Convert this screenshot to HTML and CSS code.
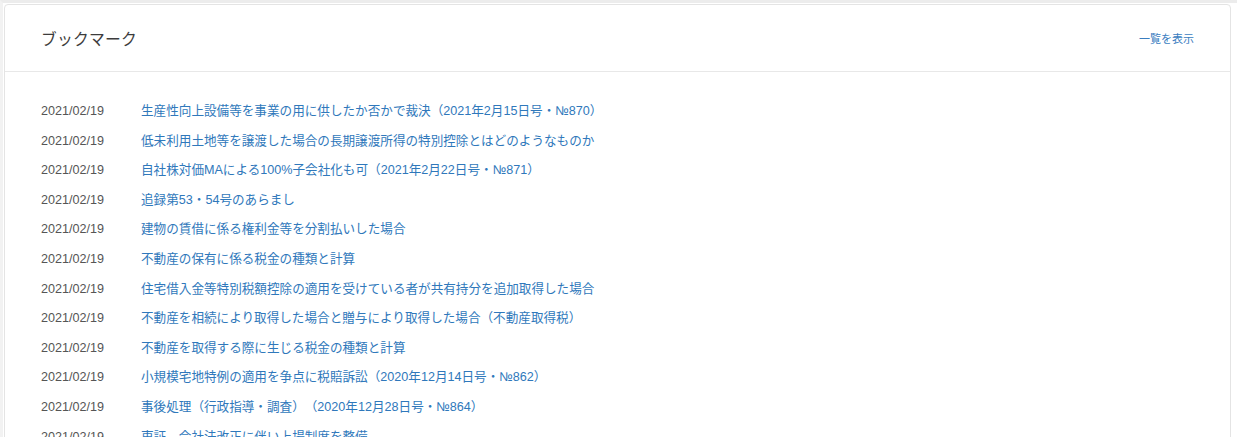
FILE: index.html
```html
<!DOCTYPE html>
<html lang="ja">
<head>
<meta charset="utf-8">
<title>ブックマーク</title>
<link rel="stylesheet" href="styles.css">
</head>
<body>
<div class="page">
  <section class="card">
    <header class="card-head">
      <h2 class="card-title">ブックマーク</h2>
      <a class="more" href="#">一覧を表示</a>
    </header>
    <ul class="list">
      <li class="row"><span class="date">2021/02/19</span><a class="title" href="#">生産性向上設備等を事業の用に供したか否かで裁決（2021年2月15日号・№870）</a></li>
      <li class="row"><span class="date">2021/02/19</span><a class="title" href="#">低未利用土地等を譲渡した場合の長期譲渡所得の特別控除とはどのようなものか</a></li>
      <li class="row"><span class="date">2021/02/19</span><a class="title" href="#">自社株対価MAによる100%子会社化も可（2021年2月22日号・№871）</a></li>
      <li class="row"><span class="date">2021/02/19</span><a class="title" href="#">追録第53・54号のあらまし</a></li>
      <li class="row"><span class="date">2021/02/19</span><a class="title" href="#">建物の賃借に係る権利金等を分割払いした場合</a></li>
      <li class="row"><span class="date">2021/02/19</span><a class="title" href="#">不動産の保有に係る税金の種類と計算</a></li>
      <li class="row"><span class="date">2021/02/19</span><a class="title" href="#">住宅借入金等特別税額控除の適用を受けている者が共有持分を追加取得した場合</a></li>
      <li class="row"><span class="date">2021/02/19</span><a class="title" href="#">不動産を相続により取得した場合と贈与により取得した場合（不動産取得税）</a></li>
      <li class="row"><span class="date">2021/02/19</span><a class="title" href="#">不動産を取得する際に生じる税金の種類と計算</a></li>
      <li class="row"><span class="date">2021/02/19</span><a class="title" href="#">小規模宅地特例の適用を争点に税賠訴訟（2020年12月14日号・№862）</a></li>
      <li class="row"><span class="date">2021/02/19</span><a class="title" href="#">事後処理（行政指導・調査）（2020年12月28日号・№864）</a></li>
      <li class="row"><span class="date">2021/02/19</span><a class="title" href="#">東証、会社法改正に伴い上場制度を整備</a></li>
    </ul>
  </section>
</div>
</body>
</html>
```
FILE: styles.css
```css
html, body {
  margin: 0;
  padding: 0;
  background: #ffffff;
  overflow: hidden;
}
body {
  font-family: "Liberation Sans", "Noto Sans CJK JP", sans-serif;
  color: #333;
  text-spacing-trim: space-all;
}
.page {
  border-top: 3px solid #ececec;
  border-left: 3px solid #f2f2f2;
  padding: 1px 0 0 1px;
  height: 437px;
  box-sizing: border-box;
  overflow: hidden;
}
.card {
  width: 1227px;
  border: 1px solid #e4e4e4;
  border-radius: 4px;
  background: #fff;
  box-sizing: border-box;
  min-height: 600px;
}
.card-head {
  display: flex;
  align-items: center;
  justify-content: space-between;
  height: 66px;
  padding: 0 36px 0 36px;
  border-bottom: 1px solid #e8e8e8;
}
.card-title {
  margin: 0;
  font-size: 15.8px;
  font-weight: normal;
  color: #3c3c3c;
  letter-spacing: 0.2px;
}
.more {
  font-size: 11px;
  color: #3a7dbf;
  text-decoration: none;
}
.list {
  list-style: none;
  margin: 0;
  padding: 25px 0 0 36px;
}
.row {
  display: flex;
  align-items: baseline;
  height: 29.6px;
  line-height: 29.6px;
  font-size: 12.6px;
}
.date {
  width: 100px;
  color: #555;
  flex: none;
}
.title {
  color: #2f78bb;
  text-decoration: none;
}
```
